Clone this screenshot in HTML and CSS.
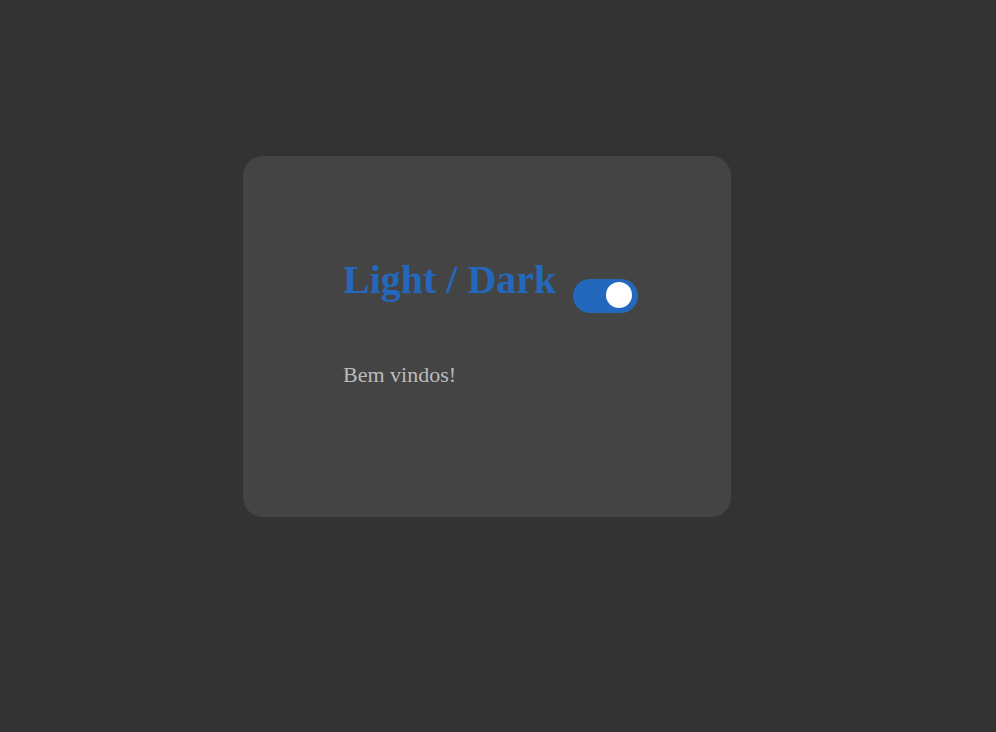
FILE: index.html
```html
<!DOCTYPE html>
<html lang="pt">
<head>
<meta charset="utf-8">
<title>Light / Dark</title>
<link rel="stylesheet" href="styles.css">
</head>
<body>
<main class="card">
  <div class="header">
    <h1 class="title">Light / Dark</h1>
    <label class="switch">
      <input type="checkbox" checked>
      <span class="slider"></span>
    </label>
  </div>
  <p class="text">Bem vindos!</p>
</main>
</body>
</html>
```
FILE: styles.css
```css
html, body {
  margin: 0;
  padding: 0;
  background: #333333;
  height: 100%;
}
body {
  padding: 156px 0 0 243px;
  box-sizing: border-box;
  font-family: "Liberation Serif", "Times New Roman", serif;
}
.card {
  width: 488px;
  height: 361px;
  box-sizing: border-box;
  background: #444444;
  border-radius: 20px;
  padding: 101px 0 0 100px;
}
.header {
  display: flex;
  align-items: flex-start;
  gap: 17px;
}
.title {
  margin: 0;
  font-size: 40px;
  line-height: 46px;
  font-weight: bold;
  color: #2468be;
}
.switch {
  position: relative;
  display: block;
  width: 65px;
  height: 34px;
  margin-top: 22px;
}
.switch input {
  opacity: 0;
  width: 0;
  height: 0;
  margin: 0;
  position: absolute;
}
.slider {
  position: absolute;
  inset: 0;
  background: #2468be;
  border-radius: 17px;
}
.slider::before {
  content: "";
  position: absolute;
  width: 26px;
  height: 26px;
  top: 3px;
  left: 33px;
  border-radius: 50%;
  background: #ffffff;
}
.text {
  margin: 49px 0 0 0;
  font-size: 22px;
  line-height: 25px;
  color: #bbbbbb;
}
```
